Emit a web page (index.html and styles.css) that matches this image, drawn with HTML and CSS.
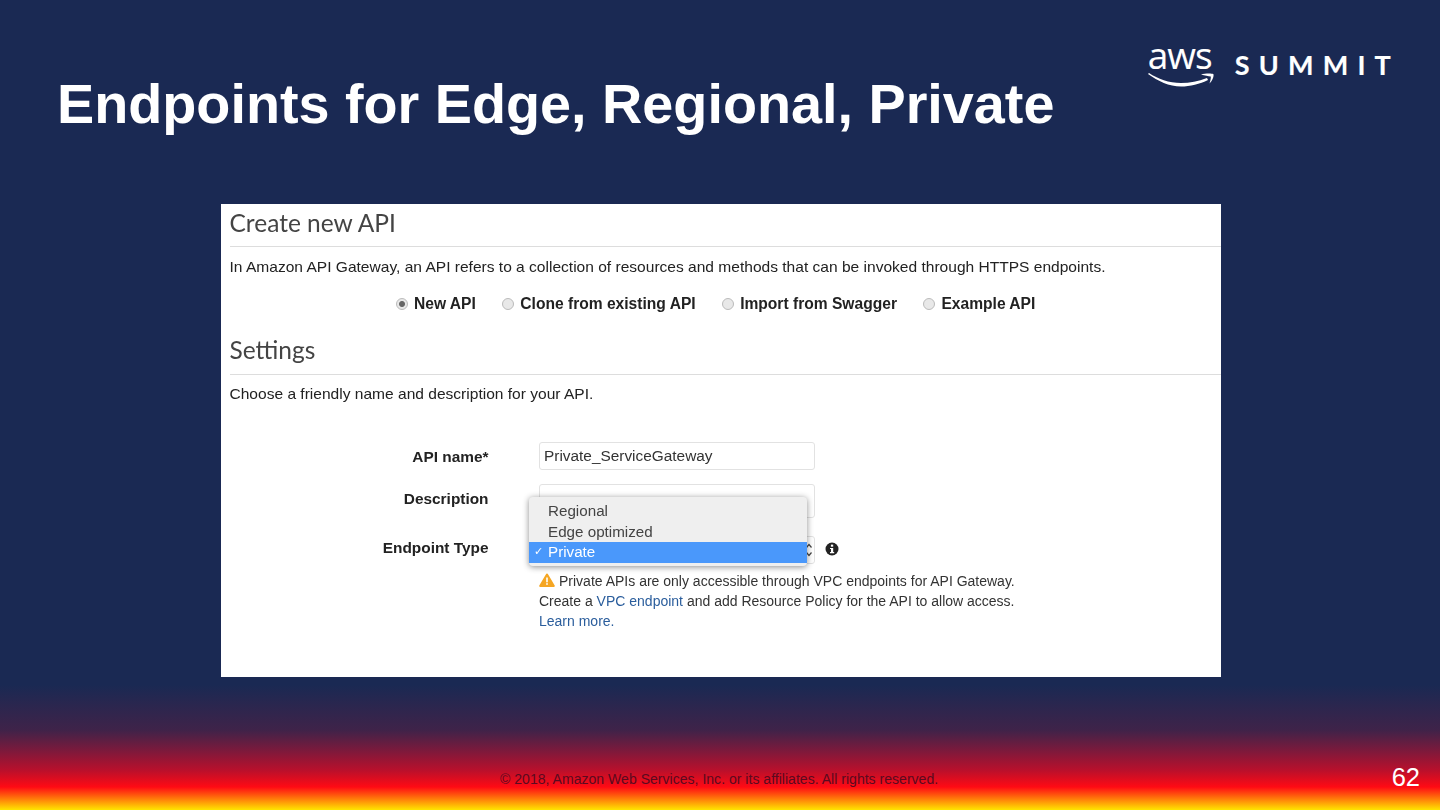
FILE: index.html
```html
<!DOCTYPE html>
<html>
<head>
	<meta charset="utf-8">
	<title>Endpoints for Edge, Regional, Private</title>
	<link rel="stylesheet" href="styles.css">
</head>
<body>
	<div class="slide">
		<div class="top">
			<h1 class="title">Endpoints for Edge, Regional, Private</h1>
			<div class="logo">
				<div class="aws">
					<span class="aws-word">aws</span>
					<svg class="smile" width="68" height="16" viewBox="0 0 68 16">
						<path d="M0 2C10 9 21 14.500 33 14.500C42 14.500 52 12 60 8L59 6C50 9.500 42 11 33 11C21 11 10 7 1 1Z" fill="#fff"/>
						<path d="M53 2.500C57 1.500 63 1.200 65.500 2.200C66 5 64 9 61.500 11.500C62.300 9 63 6.500 62.800 4.500C60.500 4 57 3.800 53 2.500Z" fill="#fff"/>
					</svg>
				</div>
				<span class="summit">SUMMIT</span>
			</div>
		</div>

		<div class="panel">
			<h2 class="head">Create new API</h2>
			<p class="intro">In Amazon API Gateway, an API refers to a collection of resources and methods that can be invoked through HTTPS endpoints.</p>
			<div class="radios">
				<label class="radio"><i class="dot on"></i>New API</label>
				<label class="radio"><i class="dot"></i>Clone from existing API</label>
				<label class="radio"><i class="dot"></i>Import from Swagger</label>
				<label class="radio"><i class="dot"></i>Example API</label>
			</div>
			<h2 class="head head2">Settings</h2>
			<p class="intro intro2">Choose a friendly name and description for your API.</p>

			<div class="form">
				<div class="row row-name">
					<div class="lbl">API name*</div>
					<div class="input">Private_ServiceGateway</div>
				</div>
				<div class="row row-desc">
					<div class="lbl">Description</div>
					<div class="input tall"></div>
				</div>
				<div class="row row-type">
					<div class="lbl">Endpoint Type</div>
					<div class="input select">
						<svg class="updown" width="6" height="16" viewBox="0 0 6 16">
							<path d="M.5 5.500L3 2.500L5.500 5.500M.5 10.500L3 13.500L5.500 10.500" fill="none" stroke="#444" stroke-width="1.200"/>
						</svg>
					</div>
					<svg class="info" width="14" height="14" viewBox="0 0 14 14">
						<circle cx="7" cy="7" r="6.500" fill="#222"/>
						<rect x="5.900" y="2.600" width="2.300" height="2.100" fill="#fff"/>
						<path d="M5 6h3.200v4.100H9.200v1.100H5v-1.100h1v-3H5z" fill="#fff"/>
					</svg>
					<div class="menu">
						<div class="opt">Regional</div>
						<div class="opt">Edge optimized</div>
						<div class="opt sel"><span class="tick">✓</span>Private</div>
					</div>
				</div>
				<div class="note">
					<div class="note-line">
						<svg class="warn" width="16" height="14" viewBox="0 0 16 14">
							<path d="M8 .5a1 1 0 0 1 .9.500l6.800 11.400a1 1 0 0 1-.9 1.500H1.200a1 1 0 0 1-.9-1.500L7.100 1A1 1 0 0 1 8 .5z" fill="#f5a623"/>
							<rect x="7.200" y="4.500" width="1.600" height="4.800" fill="#fff"/>
							<rect x="7.200" y="10.200" width="1.600" height="1.600" fill="#fff"/>
						</svg>Private APIs are only accessible through VPC endpoints for API Gateway.
					</div>
					<div class="note-line">Create a <a class="lnk" href="#">VPC endpoint</a> and add Resource Policy for the API to allow access.</div>
					<div class="note-line"><a class="lnk" href="#">Learn more.</a></div>
				</div>
			</div>
		</div>

		<div class="foot">
			<span class="copy">© 2018, Amazon Web Services, Inc. or its affiliates. All rights reserved.</span>
			<span class="num">62</span>
		</div>
	</div>
</body>
</html>
```

FILE: styles.css
```css
html, body {
	margin: 0;
	padding: 0;
}
body {
	width: 1440px;
	height: 810px;
	overflow: hidden;
	font-family: "Liberation Sans", Arial, sans-serif;
}
.slide {
	width: 1440px;
	height: 810px;
	display: flex;
	flex-direction: column;
	background: linear-gradient(to bottom, #1a2953 0, #1a2953 685px, #3f2349 730px, #7a1a3c 750px, #b8102c 770px, #ff0a14 787px, #ffe600 810px);
}

/***************** header **************************************************/
.top {
	height: 204px;
	display: flex;
	justify-content: space-between;
	padding: 0 49px 0 57px;
	box-sizing: border-box;
}
.title {
	margin: 71px 0 0;
	font-size: 55.750px;
	line-height: 66px;
	font-weight: bold;
	color: #fff;
}
.logo {
	display: flex;
	align-items: flex-start;
	padding-top: 38px;
	color: #fff;
}
.aws {
	width: 68px;
	height: 50px;
	display: flex;
	flex-direction: column;
	margin-right: 19px;
}
.aws-word {
	font-family: "Open Sans", sans-serif;
	font-size: 37px;
	line-height: 34px;
	letter-spacing: -1px;
	-webkit-text-stroke: .1px #fff;
}
.summit {
	font-family: "Lato", sans-serif;
	font-weight: bold;
	font-size: 27px;
	line-height: 54px;
	letter-spacing: 9.200px;
	margin-right: -9px;
	-webkit-text-stroke: .15px #fff;
}

/***************** panel **************************************************/
.panel {
	width: 1000px;
	height: 473px;
	margin-left: 221px;
	background: #fff;
	box-sizing: border-box;
	padding-left: 8.500px;
	color: #222;
	font-size: 15.550px;
	filter: blur(.3px);
}
.head {
	margin: 0;
	height: 42px;
	line-height: 37px;
	font-family: "Lato", sans-serif;
	font-size: 24.500px;
	font-weight: normal;
	color: #444;
	border-bottom: 1px solid #ddd;
}
.head2 {
	height: 43px;
	line-height: 38px;
}
.intro {
	margin: 0;
	height: 40px;
	line-height: 40px;
}
.intro2 {
	line-height: 38px;
}
.radios {
	display: flex;
	height: 44px;
	align-items: flex-start;
	padding: 8px 0 0 166.500px;
	box-sizing: border-box;
	gap: 26.500px;
	font-size: 15.600px;
	font-weight: bold;
	line-height: 18px;
}
.radio {
	display: flex;
	align-items: center;
}
.dot {
	width: 12px;
	height: 12px;
	margin-right: 6px;
	border-radius: 50%;
	background: #e8e8e8;
	border: 1px solid #bbb;
	box-sizing: border-box;
}
.dot.on {
	background: radial-gradient(circle, #666 0, #666 2.500px, #e8e8e8 3.500px);
}

/***************** form **************************************************/
.form {
	padding-top: 27px;
}
.row {
	display: flex;
	align-items: flex-start;
	position: relative;
}
.lbl {
	width: 259px;
	text-align: right;
	font-size: 15.400px;
	font-weight: bold;
	margin-right: 50.500px;
	line-height: 18px;
}
.input {
	width: 276px;
	height: 28px;
	line-height: 26px;
	border: 1px solid #e2e2e2;
	border-radius: 3px;
	box-sizing: border-box;
	padding-left: 4px;
	font-size: 15.400px;
	color: #333;
}
.row-name {
	height: 42px;
}
.row-name .lbl {
	padding-top: 6px;
}
.row-desc {
	height: 52px;
}
.row-desc .lbl {
	padding-top: 6px;
}
.tall {
	height: 34px;
}
.row-type {
	height: 35px;
}
.row-type .lbl {
	padding-top: 3px;
}
.select {
	display: flex;
	justify-content: flex-end;
	align-items: center;
	padding-right: 2px;
}
.info {
	margin: 6px 0 0 10px;
}
.menu {
	position: absolute;
	left: 299.500px;
	top: -39px;
	width: 278px;
	height: 69px;
	padding-top: 4px;
	box-sizing: border-box;
	background: #efefef;
	border-radius: 4px;
	box-shadow: 0 1px 6px rgba(0, 0, 0, .45);
	font-size: 15.200px;
	color: #444;
}
.opt {
	height: 20.500px;
	line-height: 20.500px;
	padding-left: 19px;
	position: relative;
}
.sel {
	background: #4a98fb;
	color: #fff;
}
.tick {
	position: absolute;
	left: 5px;
	font-family: "DejaVu Sans", sans-serif;
	font-size: 11px;
	font-weight: bold;
}
.note {
	margin-left: 309.500px;
	font-size: 14px;
	color: #333;
}
.note-line {
	height: 20px;
	line-height: 20px;
	white-space: nowrap;
}
.warn {
	margin-right: 4px;
	vertical-align: -1px;
}
.lnk {
	color: #2a5d9c;
	text-decoration: none;
}

/***************** footer **************************************************/
.foot {
	flex: 1;
	position: relative;
}
.copy {
	position: absolute;
	left: 500px;
	top: 94px;
	font-size: 14.070px;
	line-height: 16px;
	color: #5a0a20;
}
.num {
	position: absolute;
	right: 20px;
	top: 86px;
	font-size: 25.500px;
	line-height: 28px;
	color: #fff;
}
```
